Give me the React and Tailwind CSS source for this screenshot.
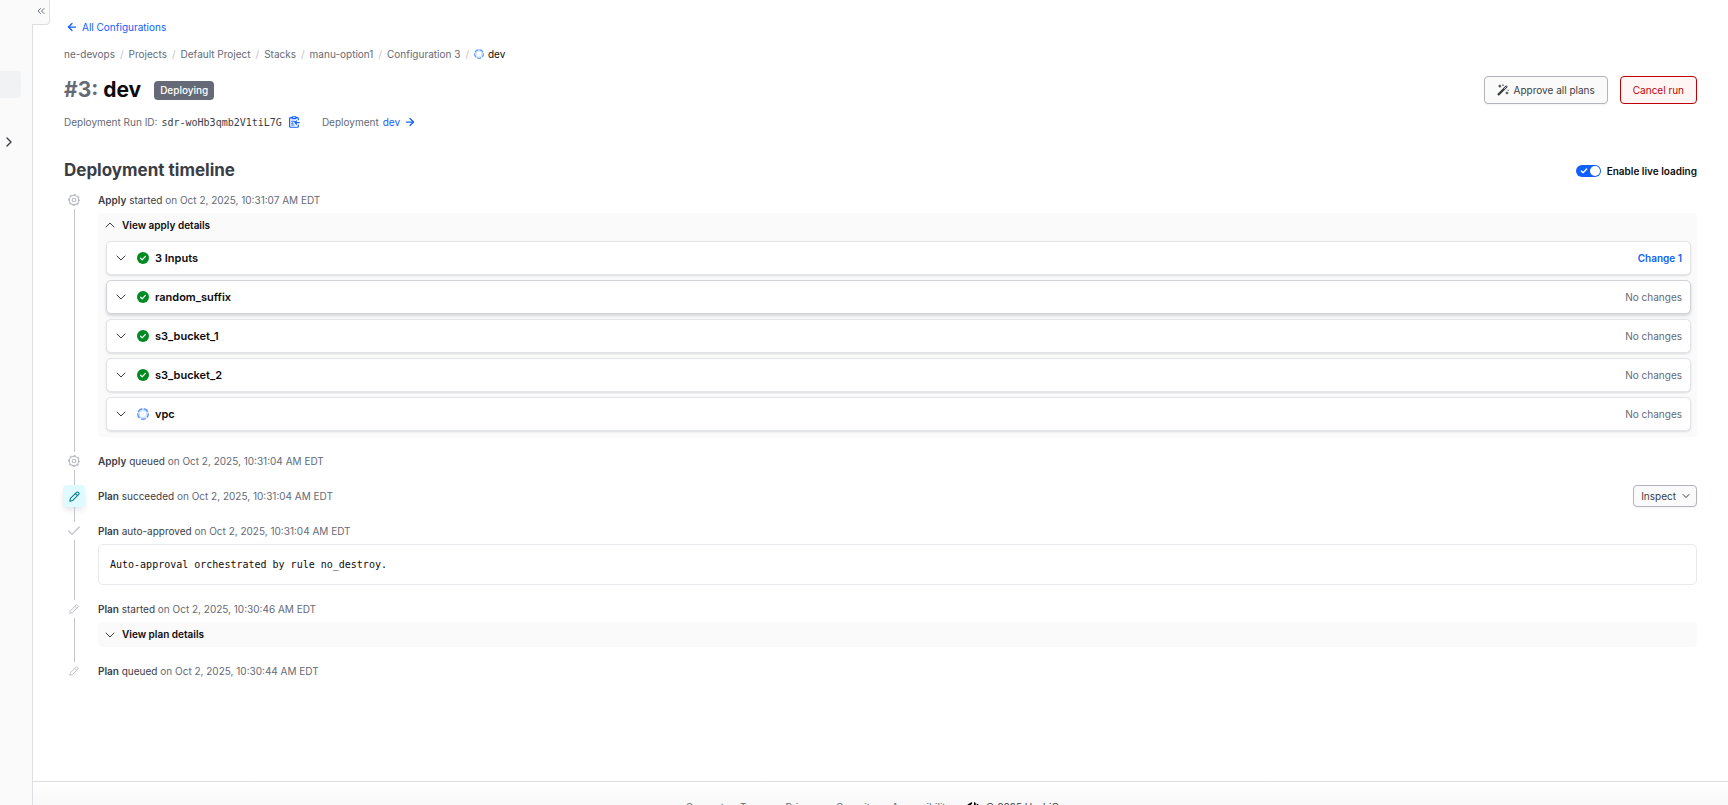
import { ArrowLeft, ArrowRight, Check, ChevronDown, ChevronRight, ChevronUp, ChevronsLeft } from "lucide-react";

const crumbs = ["ne-devops", "Projects", "Default Project", "Stacks", "manu-option1", "Configuration 3"];

const components = [
  { name: "3 Inputs", status: "done", change: "Change 1" },
  { name: "random_suffix", status: "done", active: true },
  { name: "s3_bucket_1", status: "done" },
  { name: "s3_bucket_2", status: "done" },
  { name: "vpc", status: "running" },
];

const footerLinks = ["Support", "Terms", "Privacy", "Security", "Accessibility"];

function RunningIcon({ className }) {
  return (
    <svg viewBox="0 0 16 16" fill="none" className={className} aria-hidden="true">
      <circle cx="8" cy="8" r="5.4" stroke="#cce3fe" strokeWidth="2.6" />
      <circle cx="8" cy="8" r="7.1" stroke="#1060ff" strokeOpacity="0.65" strokeWidth="1.8" strokeDasharray="6.9 2" strokeDashoffset="2" />
    </svg>
  );
}

function DoneIcon({ className }) {
  return (
    <svg viewBox="0 0 16 16" fill="none" className={className} aria-hidden="true">
      <circle cx="8" cy="8" r="8" fill="#008a22" />
      <path d="M4.8 8.4l2.1 2.1 4.3-4.6" stroke="#fff" strokeWidth="1.7" strokeLinecap="round" strokeLinejoin="round" />
    </svg>
  );
}

function GearIcon({ className }) {
  return (
    <svg viewBox="0 0 16 16" fill="none" stroke="currentColor" className={className} aria-hidden="true">
      <circle cx="8" cy="8" r="6.2" strokeWidth="1.5" />
      <circle cx="8" cy="8" r="7.3" strokeWidth="1.4" strokeDasharray="2.9 2.83" strokeDashoffset="1.4" />
      <circle cx="8" cy="8" r="2.4" strokeWidth="1.5" />
    </svg>
  );
}

function PencilIcon({ className }) {
  return (
    <svg viewBox="0 0 16 16" fill="none" stroke="currentColor" strokeWidth="1.5" strokeLinejoin="round" className={className} aria-hidden="true">
      <path d="M1.2 14.8l.9-4L11 1.9a1.600 1.600 0 0 1 2.300 0l.8.8a1.600 1.600 0 0 1 0 2.300l-8.900 8.900z" />
      <path d="M9.3 3.7l3 3" />
    </svg>
  );
}

function WandIcon({ className }) {
  return (
    <svg viewBox="0 0 16 16" fill="none" stroke="currentColor" className={className} aria-hidden="true">
      <path d="M2.200 13.800L12.500 3.500" strokeWidth="3" strokeLinecap="round" />
      <path d="M9.500 6.500l3-3" stroke="#fafafa" strokeWidth="1" />
      <path d="M3.800 1v3.600M2 2.800h3.600M13.300 10.200v3.600M11.500 12h3.600M8 .6v2M15 7.500V9" strokeWidth="1.500" />
    </svg>
  );
}

function ClipboardIcon({ className }) {
  return (
    <svg viewBox="0 0 16 16" fill="none" stroke="currentColor" strokeWidth="1.6" strokeLinecap="round" strokeLinejoin="round" className={className} aria-hidden="true">
      <path d="M11 2.200h1.500a1.300 1.300 0 0 1 1.300 1.300V5M5 2.200H3.500a1.300 1.300 0 0 0-1.300 1.300v10.200A1.300 1.300 0 0 0 3.500 15h9a1.300 1.300 0 0 0 1.300-1.300V12" />
      <path d="M5.500 1h5v2.500h-5zM5 7h4M5 9.500h1.500M5 12h3M15 8.800H9.500M11.500 6.500L9.200 8.800l2.300 2.300" />
    </svg>
  );
}

function HashiLogo({ className }) {
  return (
    <svg viewBox="0 0 16 16" fill="#000" className={className} aria-hidden="true">
      <path d="M6.700 0L.8 3.400v9.200l2.300 1.300V4.800l3.600-2.100zM9.300 0v6.700H6.700V4L4.400 5.300v9.400L6.700 16V9.300h2.600V12l2.300-1.300V1.300zM12.900 2.100v9.100l-3.600 2.100V16l5.900-3.400V3.400z" />
    </svg>
  );
}

function TimelineItem({ icon, highlight, action, date, children, trailing, last }) {
  return (
    <li className="flex gap-[14px]">
      <div className="flex w-5 shrink-0 flex-col items-center">
        {highlight ? (
          <span className="flex h-[22px] w-[22px] items-center justify-center rounded bg-[#dffbff] text-[#00788a] shadow-md shadow-gray-200">{icon}</span>
        ) : (
          <span className="flex h-[18px] items-center text-[#b9bcc3]">{icon}</span>
        )}
        {!last && <span className="w-px flex-1 bg-[#c2c5cb]" />}
      </div>
      <div className={last ? "min-w-0 flex-1" : "min-w-0 flex-1 pb-[15px]"}>
        <div className={highlight ? "flex h-[22px] items-center justify-between" : "flex h-[18px] items-center justify-between"}>
          <p className="text-[10px] text-[#656a76]">
            <span className="font-semibold text-[#3b3d45]">{action[0]}</span> <span className="text-[#3b3d45]">{action[1]}</span> on {date}
          </p>
          {trailing}
        </div>
        {children}
      </div>
    </li>
  );
}

function ComponentRow({ item }) {
  return (
    <button
      className={`flex h-[34px] w-full items-center rounded-[5px] border bg-white pr-2 pl-[10px] text-left ${
        item.active ? "border-[#d0d2d8] shadow-[0_2px_3px_#656a7640]" : "border-[#e3e4e8] shadow-[0_1px_2px_#656a7633]"
      }`}
    >
      <ChevronDown className="-ml-1 h-4 w-4 text-[#3b3d45]" strokeWidth={1.5} />
      {item.status === "done" ? <DoneIcon className="ml-2 h-3 w-3" /> : <RunningIcon className="ml-2 h-3 w-3" />}
      <span className="ml-[6px] text-[11px] font-semibold text-[#0c0c0e]">{item.name}</span>
      <span className={item.change ? "ml-auto text-[10px] font-semibold text-[#1060ff]" : "ml-auto text-[10px] text-[#656a76]"}>
        {item.change || "No changes"}
      </span>
    </button>
  );
}

export default function App() {
  return (
    <div className="flex h-screen overflow-hidden bg-white font-[Inter,sans-serif] text-[#656a76]">
      <aside className="relative w-[33px] shrink-0 border-r border-[#dedfe3] bg-[#fafafa]">
        <div className="mt-[71px] h-[27px] w-[21px] rounded-r bg-[#f1f2f3]" />
        <button aria-label="Expand section" className="mt-9 ml-px block">
          <ChevronRight className="h-4 w-4 text-[#3b3d45]" />
        </button>
        <button
          aria-label="Toggle sidebar"
          className="absolute top-0 left-8 flex h-[25px] w-[18px] items-center justify-center rounded-br border-r border-b border-[#dedfe3] bg-[#fafafa] pb-0.5"
        >
          <ChevronsLeft className="h-3 w-3 text-[#656a76]" strokeWidth={2} />
        </button>
      </aside>

      <div className="flex min-w-0 flex-1 flex-col">
        <main className="flex-1 px-[31px] pt-[19px]">
          <a href="#" className="flex h-4 w-fit items-center gap-1 pl-[2px] text-[10px] text-[#1060ff]">
            <ArrowLeft className="h-3 w-3" strokeWidth={2.5} />
            All Configurations
          </a>

          <nav aria-label="Breadcrumb" className="mt-[11px] flex h-4 items-center text-[10px]">
            {crumbs.map((crumb) => (
              <span key={crumb} className="flex">
                <a href="#">{crumb}</a>
                <span className="mx-[5px] text-[#c2c5cb]">/</span>
              </span>
            ))}
            <RunningIcon className="h-2.5 w-2.5" />
            <span className="ml-1 text-[#0c0c0e]">dev</span>
          </nav>

          <header className="mt-[14px] flex items-start justify-between">
            <div>
              <div className="flex h-7 items-center">
                <h1 className="text-[21px] font-bold text-[#0c0c0e]">
                  <span className="text-[#656a76]">#3:</span> dev
                </h1>
                <span className="ml-[13px] flex h-[19px] items-center rounded bg-[#656a76] px-[6px] text-[10px] font-medium text-white">Deploying</span>
              </div>
              <div className="mt-2 flex h-5 items-center text-[10px]">
                Deployment Run ID:
                <code className="ml-1 font-['DejaVu_Sans_Mono',monospace] text-[10px] text-[#3b3d45]">sdr-woHb3qmb2V1tiL7G</code>
                <button aria-label="Copy run ID" className="ml-[6px] text-[#1060ff]">
                  <ClipboardIcon className="h-3 w-3" />
                </button>
                <span className="ml-[22px]">Deployment</span>
                <a href="#" className="ml-1 flex items-center gap-1 text-[#1060ff]">
                  dev <ArrowRight className="h-3 w-3" strokeWidth={2.5} />
                </a>
              </div>
            </div>
            <div className="flex gap-3">
              <button className="flex h-7 items-center gap-[5px] rounded border border-[#b1b4bb] bg-[#fafafa] px-3 text-[10px] text-[#3b3d45] shadow-xs">
                <WandIcon className="h-3 w-3" />
                Approve all plans
              </button>
              <button className="h-7 rounded border border-[#c00005] bg-[#fff5f5] px-3 text-[10px] text-[#c00005]">Cancel run</button>
            </div>
          </header>

          <div className="mt-[27px] flex h-6 items-center justify-between">
            <h2 className="text-[17px] font-bold text-[#3b3d45]">Deployment timeline</h2>
            <label className="flex items-center gap-[6px] text-[10px] font-semibold text-[#0c0c0e]">
              <span className="relative flex h-3 w-[25px] items-center">
                <input type="checkbox" defaultChecked className="h-3 w-[25px] appearance-none rounded-full bg-gray-300 checked:bg-[#1060ff]" />
                <Check className="pointer-events-none absolute left-1 h-2 w-2 text-white" strokeWidth={4} />
                <span className="pointer-events-none absolute right-px h-2.5 w-2.5 rounded-full bg-white" />
              </span>
              Enable live loading
            </label>
          </div>

          <ol className="mt-2">
            <TimelineItem icon={<GearIcon className="h-3 w-3" />} action={["Apply", "started"]} date="Oct 2, 2025, 10:31:07 AM EDT">
              <section className="mt-1 rounded bg-[#fafafa] pr-[6px] pb-[6px] pl-2">
                <button className="flex h-7 w-full items-center gap-1 pb-1 text-[10px] font-semibold text-[#0c0c0e]">
                  <ChevronUp className="-ml-1 h-4 w-4 text-[#3b3d45]" strokeWidth={1.5} />
                  View apply details
                </button>
                <div className="flex flex-col gap-[5px]">
                  {components.map((item) => (
                    <ComponentRow key={item.name} item={item} />
                  ))}
                </div>
              </section>
            </TimelineItem>

            <TimelineItem icon={<GearIcon className="h-3 w-3" />} action={["Apply", "queued"]} date="Oct 2, 2025, 10:31:04 AM EDT" />

            <TimelineItem
              highlight
              icon={<PencilIcon className="h-[11px] w-[11px]" />}
              action={["Plan", "succeeded"]}
              date="Oct 2, 2025, 10:31:04 AM EDT"
              trailing={
                <button className="flex h-[22px] items-center gap-1 rounded border border-[#b1b4bb] bg-[#fafafa] pr-1 pl-[7px] text-[10px] text-[#3b3d45] shadow-xs">
                  Inspect
                  <ChevronDown className="h-3 w-3" strokeWidth={2} />
                </button>
              }
            />

            <TimelineItem icon={<Check className="h-4 w-4" strokeWidth={1.75} />} action={["Plan", "auto-approved"]} date="Oct 2, 2025, 10:31:04 AM EDT">
              <pre className="mt-1 flex h-[41px] items-center rounded-[5px] border border-[#e8e9ec] px-[11px] font-['DejaVu_Sans_Mono',monospace] text-[10px] text-[#0c0c0e]">
                Auto-approval orchestrated by rule no_destroy.
              </pre>
            </TimelineItem>

            <TimelineItem icon={<PencilIcon className="h-2.5 w-2.5" />} action={["Plan", "started"]} date="Oct 2, 2025, 10:30:46 AM EDT">
              <section className="mt-1 rounded bg-[#fafafa] pr-[6px] pl-2">
                <button className="flex h-[25px] w-full items-center gap-1 text-[10px] font-semibold text-[#0c0c0e]">
                  <ChevronDown className="-ml-1 h-4 w-4 text-[#3b3d45]" strokeWidth={1.5} />
                  View plan details
                </button>
              </section>
            </TimelineItem>

            <TimelineItem last icon={<PencilIcon className="h-2.5 w-2.5" />} action={["Plan", "queued"]} date="Oct 2, 2025, 10:30:44 AM EDT" />
          </ol>
        </main>

        <footer className="flex h-6 shrink-0 items-start justify-center gap-4 border-t border-[#dedfe3] bg-linear-to-b from-white to-[#f8f8f8] pt-[18px] text-[10px]">
          {footerLinks.map((link) => (
            <a key={link} href="#">
              {link}
            </a>
          ))}
          <span className="flex items-center gap-[6px] text-[#3b3d45]">
            <HashiLogo className="h-3 w-3" />© 2025 HashiCorp
          </span>
        </footer>
      </div>
    </div>
  );
}
